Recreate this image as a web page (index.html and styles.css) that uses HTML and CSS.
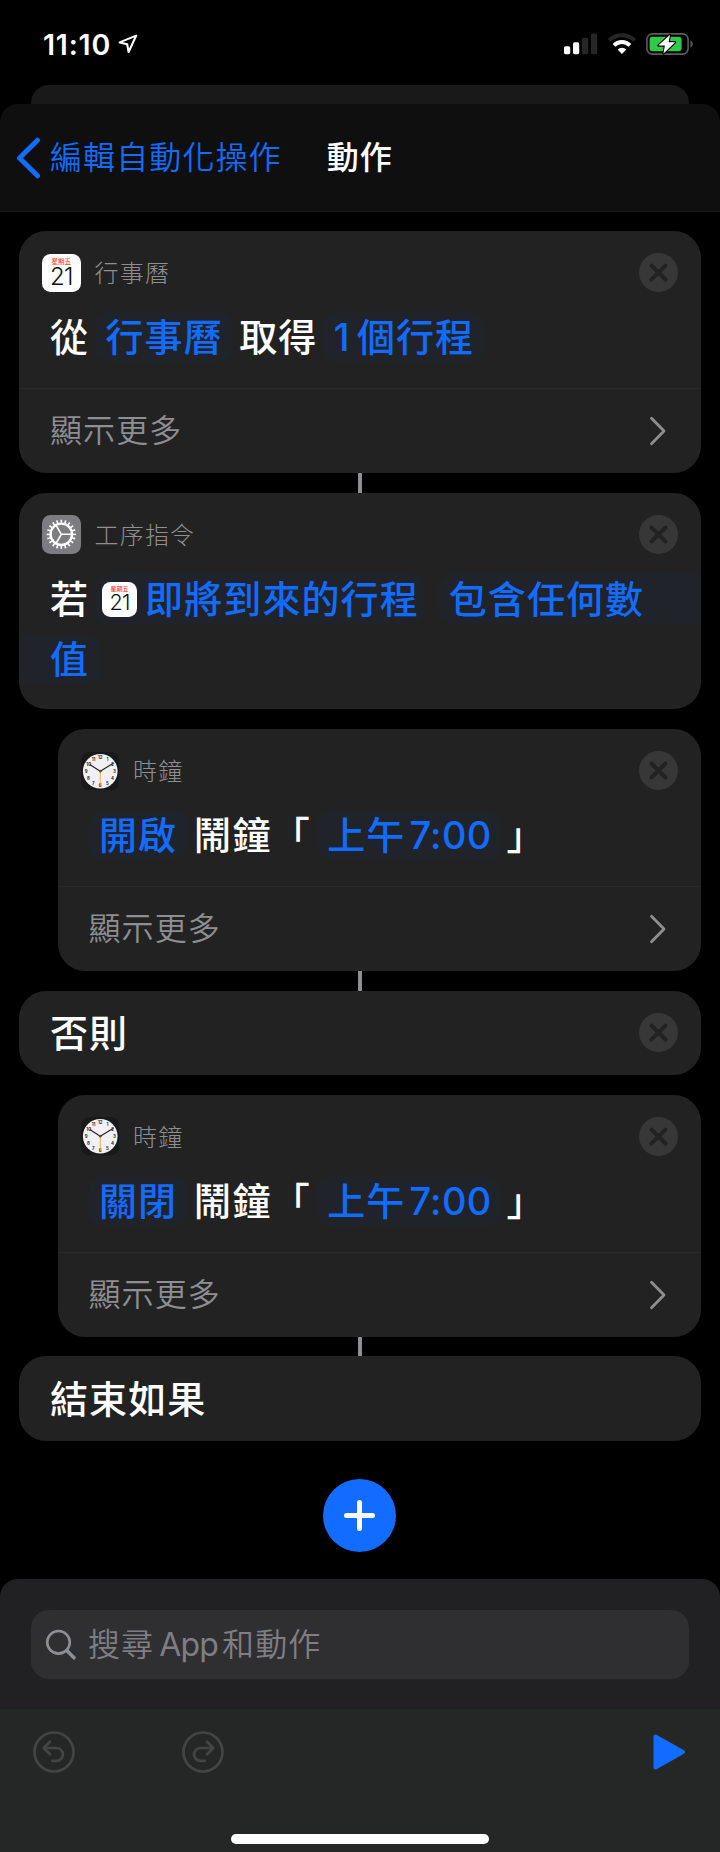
FILE: index.html
```
<!DOCTYPE html>
<html lang="zh-Hant">
<head>
  <meta charset="UTF-8">
  <meta name="viewport" content="width=device-width, initial-scale=1.0">
  <title>動作</title>
  <link rel="stylesheet" href="styles.css">
</head>
<body>

<!-- shared icons -->
<svg class="sprite" width="0" height="0">
  <symbol id="close" viewBox="0 0 39 39">
    <circle cx="19.5" cy="19.5" r="19.5" fill="#373737"/>
    <path d="M12.5 12.5l14 14M26.5 12.5l-14 14" stroke="#222" stroke-width="4" stroke-linecap="round"/>
  </symbol>
  <symbol id="chevron" viewBox="0 0 18 30">
    <path d="M2.5 2.3L15 15 2.5 27.7" fill="none" stroke="#8e8e93" stroke-width="2.8" stroke-linecap="round" stroke-linejoin="round"/>
  </symbol>
  <symbol id="clock" viewBox="0 0 38 38">
    <rect width="38" height="38" rx="8.5" fill="#191919"/>
    <circle cx="19" cy="19" r="17.1" fill="#f1f1f5"/>
    <g class="clock-num">
      <text x="19" y="7">12</text>
      <text x="26" y="9.1">1</text>
      <text x="31.3" y="14.1">2</text>
      <text x="33" y="20.7">3</text>
      <text x="31" y="27.4">4</text>
      <text x="26" y="32.4">5</text>
      <text x="19" y="34.4">6</text>
      <text x="12.2" y="32.4">7</text>
      <text x="7.2" y="27.4">8</text>
      <text x="5.2" y="20.7">9</text>
      <text x="7.6" y="14.1">10</text>
      <text x="12.4" y="9.1">11</text>
    </g>
    <path d="M19 19L9 12.6M19 19l12.5-7.6" stroke="#222" stroke-width="1.1" stroke-linecap="round"/>
    <path d="M19 18v15" stroke="#f0a63c" stroke-width=".9"/>
    <circle cx="19" cy="19" r="1.2" fill="#6b4210"/>
  </symbol>
</svg>

<header class="status">
  <div class="time">11:10
    <svg width="20" height="20" viewBox="0 0 20 20"><path d="M18.2 1.6L1.6 8.4l7.6 1.8 1.4 7.8z" fill="none" stroke="#fff" stroke-width="2.1" stroke-linejoin="round"/></svg>
  </div>
  <div class="signals">
    <svg width="34" height="22" viewBox="0 0 34 22">
      <rect x="0" y="13.2" width="6.2" height="8" rx="1.6" fill="#fff"/>
      <rect x="9" y="9.3" width="6.2" height="11.9" rx="1.6" fill="#fff"/>
      <rect x="18" y="4.8" width="6.2" height="16.4" rx="1.6" fill="#262626"/>
      <rect x="27" y="0.4" width="6.2" height="20.8" rx="1.6" fill="#262626"/>
    </svg>
    <svg class="wifi" width="30" height="22" viewBox="0 0 30 22">
      <path d="M2.2 7.4a18 18 0 0 1 25.4 0" fill="none" stroke="#262626" stroke-width="4"/>
      <path d="M7 12.3a11.2 11.2 0 0 1 15.8 0" fill="none" stroke="#fff" stroke-width="4"/>
      <path d="M10.6 16.6a6.2 6.2 0 0 1 8.6 0L14.9 21z" fill="#fff"/>
    </svg>
    <svg class="battery" width="47" height="22" viewBox="0 0 47 22">
      <rect x=".9" y=".9" width="41.2" height="20.2" rx="5.5" fill="none" stroke="#5c5c5c" stroke-width="1.6"/>
      <path d="M44.5 7.3c3 1.4 3 6 0 7.4z" fill="#5c5c5c"/>
      <rect x="3.6" y="3.7" width="32" height="14.6" rx="3" fill="#2fcb48"/>
      <path d="M24 1.8L12.3 12.6h6.6l-1.4 8L29.2 9.2h-6.6z" fill="#fff" stroke="#000" stroke-width="2.2" paint-order="stroke" stroke-linejoin="round"/>
    </svg>
  </div>
</header>

<div class="back-sheet"></div>

<nav class="navbar">
  <svg width="26" height="42" viewBox="0 0 26 42"><path d="M22.5 3.2L4.5 21l18 17.8" fill="none" stroke="#116cff" stroke-width="5" stroke-linecap="round" stroke-linejoin="round"/></svg>
  <a class="back">編輯自動化操作</a>
  <h1>動作</h1>
</nav>

<main class="actions">

  <section class="card link">
    <div class="head">
      <div class="cal"><small>星期五</small><b>21</b></div>
      <span class="app">行事曆</span>
      <svg class="close"><use href="#close"/></svg>
    </div>
    <div class="line">
      <span>從</span>
      <span class="pill">行事曆</span>
      <span>取得</span>
      <span class="pill"><span class="num one">1</span>個行程</span>
    </div>
    <div class="more"><span>顯示更多</span><svg class="chevron"><use href="#chevron"/></svg></div>
  </section>

  <section class="card">
    <div class="head">
      <div class="gear">
        <svg width="39" height="39" viewBox="0 0 39 39">
          <g fill="none" stroke="#fff">
            <circle cx="19.3" cy="19.3" r="12.8" stroke-width="3.6" pathLength="80" stroke-dasharray="1.6 2.4" stroke-dashoffset=".8"/>
            <circle cx="19.3" cy="19.3" r="10.7" stroke-width="2.4"/>
            <path d="M19.3 19.3h10.6M19.3 19.3L14 10.1M19.3 19.3L14 28.5" stroke-width="1.6"/>
          </g>
        </svg>
      </div>
      <span class="app">工序指令</span>
      <svg class="close"><use href="#close"/></svg>
    </div>
    <div class="line">
      <span>若</span>
      <span class="pill with-icon"><span class="cal small"><small>星期五</small><b>21</b></span>即將到來的行程</span>
      <span class="pill open-end">包含任何數</span>
    </div>
    <div class="line second">
      <span class="pill open-start">值</span>
    </div>
  </section>

  <section class="card nested link">
    <div class="head">
      <svg class="clock"><use href="#clock"/></svg>
      <span class="app">時鐘</span>
      <svg class="close"><use href="#close"/></svg>
    </div>
    <div class="line">
      <span class="pill">開啟</span>
      <span>鬧鐘「</span>
      <span class="pill time-pill">上午<span class="num">7:00</span></span>
      <span>」</span>
    </div>
    <div class="more"><span>顯示更多</span><svg class="chevron"><use href="#chevron"/></svg></div>
  </section>

  <section class="card single">
    <span>否則</span>
    <svg class="close"><use href="#close"/></svg>
  </section>

  <section class="card nested link">
    <div class="head">
      <svg class="clock"><use href="#clock"/></svg>
      <span class="app">時鐘</span>
      <svg class="close"><use href="#close"/></svg>
    </div>
    <div class="line">
      <span class="pill">關閉</span>
      <span>鬧鐘「</span>
      <span class="pill time-pill">上午<span class="num">7:00</span></span>
      <span>」</span>
    </div>
    <div class="more"><span>顯示更多</span><svg class="chevron"><use href="#chevron"/></svg></div>
  </section>

  <section class="card single">
    <span>結束如果</span>
  </section>

  <button class="add">
    <svg width="73" height="73" viewBox="0 0 73 73"><path d="M36.5 23.5v26M23.5 36.5h26" stroke="#fff" stroke-width="5" stroke-linecap="round"/></svg>
  </button>
</main>

<div class="search-panel">
  <div class="search">
    <svg width="32" height="32" viewBox="0 0 32 32"><g fill="none" stroke="#8e8e96" stroke-linecap="round"><circle cx="13.5" cy="13.3" r="11.3" stroke-width="2.6"/><path d="M21.8 21.6l7.2 7.2" stroke-width="3.6"/></g></svg>
    <span>搜尋<span class="latin">App</span>和動作</span>
  </div>
</div>

<footer class="toolbar">
  <div class="tools">
    <svg width="42" height="42" viewBox="0 0 42 42"><g fill="none" stroke="#444" stroke-width="2.7" stroke-linecap="round" stroke-linejoin="round"><circle cx="21" cy="21" r="19.5"/><path d="M17 10.7l-6.3 6.3 6.3 6.2M11.2 17h12.3a6.4 6.4 0 0 1 0 12.8h-4.3"/></g></svg>
    <svg width="42" height="42" viewBox="0 0 42 42"><g fill="none" stroke="#444" stroke-width="2.7" stroke-linecap="round" stroke-linejoin="round"><circle cx="21" cy="21" r="19.5"/><path d="M25 10.7l6.3 6.3-6.3 6.2M30.8 17H18.5a6.4 6.4 0 0 0 0 12.8h4.3"/></g></svg>
    <svg class="play" width="34" height="38" viewBox="0 0 34 38"><path d="M3.5 3.5v31L31 19z" fill="#116cff" stroke="#116cff" stroke-width="4" stroke-linejoin="round"/></svg>
  </div>
  <div class="home"></div>
</footer>

</body>
</html>
```

FILE: styles.css
```
* { box-sizing: border-box; }
body { margin: 0; width: 720px; height: 1852px; background: #000; color: #fff; font-family: Inter, "Noto Sans CJK TC", sans-serif; display: flex; flex-direction: column; overflow: hidden; }
svg { display: block; flex: none; }
.sprite { display: none; }

.status { height: 85px; padding: 3px 27px 0 43px; display: flex; justify-content: space-between; align-items: center; }
.time { display: flex; align-items: center; gap: 7px; font-size: 28.5px; font-weight: 600; letter-spacing: 0.8px; }
.signals { display: flex; align-items: center; }
.wifi { margin-left: 9px; }
.battery { margin-left: 9px; }

.back-sheet { height: 19px; margin: 0 31px; background: #191919; border-radius: 18px 18px 0 0; }
.navbar { height: 108px; padding-left: 15px; background: #0f0f0f; border-bottom: 1px solid #1b1b1b; border-radius: 18px 18px 0 0; display: flex; align-items: center; font-size: 32px; line-height: 40px; letter-spacing: 1.1px; }
.back { color: #116cff; margin-left: 9px; font-weight: 350; }
h1 { margin: 0 0 0 45px; font-size: 32px; font-weight: 500; }

.actions { flex: 1; padding: 18.8px 19.5px 0 19px; display: flex; flex-direction: column; gap: 19.5px; }
.card { position: relative; background: #222223; border-radius: 27px; padding-bottom: 25.2px; }
.card.link { padding-bottom: 0; }
.nested { margin-left: 38.5px; }
/* stub that joins a card to the next one, always on the screen's centre line */
.link::after { content: ""; position: absolute; top: 100%; right: 338.5px; width: 4px; height: 19.5px; background: #8e8e93; }

.head { padding: 22.7px 22.5px 0 23px; height: 61.3px; display: flex; align-items: center; }
.app { margin-left: 14px; padding-top: 2px; font-size: 24px; line-height: 30px; font-weight: 300; letter-spacing: 1.2px; color: #8f8f8f; }
.close { width: 39px; height: 39px; margin-left: auto; }
.clock { width: 38.5px; height: 38.5px; }
.clock-num { font: 700 4.3px Inter, sans-serif; text-anchor: middle; fill: #222; }

.cal { width: 38.5px; height: 38.5px; flex: none; border-radius: 8.5px; background: #fff; color: #111; display: flex; flex-direction: column; align-items: center; letter-spacing: 0; }
.cal small { margin-top: 5px; font-size: 6.5px; line-height: 7px; font-weight: 500; color: #fb3c35; }
.cal b { font-size: 24px; line-height: 22px; font-weight: 300; letter-spacing: -0.8px; }
.cal.small { width: 35px; height: 35px; margin-right: 8px; }
.cal.small small { margin-top: 4.5px; font-size: 6px; line-height: 6px; }
.cal.small b { font-size: 21.5px; line-height: 20px; }
.gear { width: 38.5px; height: 38.5px; border-radius: 8.5px; background: #7c7c81; }

.line { margin-top: 20.2px; padding-left: 31px; height: 50px; line-height: 50px; display: flex; gap: 6px; font-size: 38px; font-weight: 500; letter-spacing: 1.1px; white-space: nowrap; }
.line.second { margin-top: 10px; }
.pill { display: flex; align-items: center; padding: 0 10.4px; border-radius: 15px; background: #20242a; color: #116cff; }
.with-icon { padding: 0 6.5px 0 7px; }
.open-end { flex: 1; margin-left: 7px; border-radius: 15px 0 0 15px; }
.open-start { margin-left: -31px; padding-left: 31px; border-radius: 0 15px 15px 0; }
.time-pill { padding-right: 9px; }
.num { margin-left: 4px; letter-spacing: 0.3px; }
.num.one { margin: 0 7px 0 0; }

.more { margin-top: 25.9px; height: 85px; padding: 0 33.5px 0 31px; border-top: 1px solid #2a2a2b; display: flex; align-items: center; justify-content: space-between; font-size: 32px; line-height: 40px; font-weight: 350; letter-spacing: 1.1px; color: #8e8e93; }
.chevron { width: 18px; height: 30px; }

.single { height: 84.3px; padding: 0 22.5px 0 31px; display: flex; align-items: center; font-size: 38px; line-height: 50px; font-weight: 500; letter-spacing: 1.1px; }

.add { align-self: center; margin-top: 19px; width: 73px; height: 73px; padding: 0; border: none; border-radius: 50%; background: #116cff; }

.search-panel { height: 129.5px; flex: none; padding: 31px 31px 0; background: #212123; border-radius: 18px 18px 0 0; }
.search { height: 69px; padding-left: 14px; border-radius: 18px; background: #2f2f31; display: flex; align-items: center; gap: 11px; font-size: 32px; line-height: 40px; font-weight: 350; letter-spacing: 1.1px; color: #7f7e85; }
.latin { margin: 0 4px 0 5px; letter-spacing: -0.8px; font-weight: 400; }

.toolbar { height: 143.5px; flex: none; background: #252726; }
.tools { height: 87px; padding: 0 34px 0 33px; display: flex; align-items: center; gap: 107px; }
.play { margin-left: auto; }
.home { width: 258px; height: 10px; margin: 38px auto 0; border-radius: 5px; background: #fff; }
```
